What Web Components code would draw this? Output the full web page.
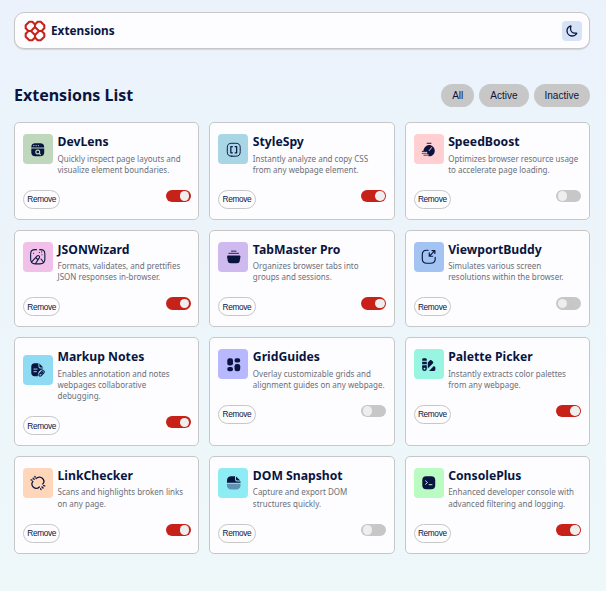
<!DOCTYPE html>
<html lang="en">
<head>
<meta charset="utf-8">
<title>Extensions</title>
<style>
html{height:100%}
body{margin:0;min-height:100%;background:linear-gradient(180deg,#ebf2fc 0%,#eef8f9 100%);font-family:"Noto Sans",sans-serif;color:#091540}
</style>
</head>
<body>
<extensions-app></extensions-app>
<script>
const define=(name,html,setup)=>customElements.define(name,class extends HTMLElement{
  connectedCallback(){
    if(this.shadowRoot)return;
    const t=document.createElement('template');
    t.innerHTML=typeof html==='function'?html(this):html;
    this.attachShadow({mode:'open'}).append(t.content.cloneNode(true));
    if(setup)setup(this,this.shadowRoot);
  }
});
const D='#091540';
const ICONS={
  lens:['#bfd8bd',`<path fill="${D}" d="M2 8.200C2 4 4 2 8.200 2h7.600C20 2 22 4 22 8.200v.3H2zM2 10h20v5.800C22 20 20 22 15.800 22H8.200C4 22 2 20 2 15.800z"/><g fill="#bfd8bd"><circle cx="6" cy="5.600" r="1"/><circle cx="9.500" cy="5.600" r="1"/><circle cx="13" cy="5.600" r="1"/></g><g fill="none" stroke="#bfd8bd" stroke-width="1.800" stroke-linecap="round"><circle cx="12" cy="15.500" r="3"/><path d="m14.400 18 1.600 1.400"/></g>`],
  style:['#a9d6e5',`<g fill="none" stroke="${D}" stroke-width="1.500" stroke-linecap="round" stroke-linejoin="round"><path d="M9 22h6c5 0 7-2 7-7V9c0-5-2-7-7-7H9C4 2 2 4 2 9v6c0 5 2 7 7 7z"/><path d="M9.800 7.200H7.500v9.600h2.300M14.200 7.200h2.300v9.600h-2.300" stroke-width="1.900"/></g>`],
  speed:['#ffcfd2',`<path fill="${D}" d="M12.300 4.600c5 0 9 4 9 8.800 0 4.900-4 8.600-8.800 8.600-1.600 0-2.700-.4-3.900-1.100H12v-1.500H5.700c-.5-.5-.8-1-.9-1.500H9v-1.500H3.700c-.5-5.800 3.300-11.800 8.600-11.800z"/><path fill="none" stroke="${D}" stroke-width="1.500" stroke-linecap="round" d="M9.500 2h6M2 14.600h5M2 17.400h5M4.500 20.200h4"/><path fill="none" stroke="#ffcfd2" stroke-width="1.500" stroke-linecap="round" d="m12.800 13.200 3.600-4.500M2 16h7M4 18.800h5.500"/>`],
  json:['#f1c0e8',`<g fill="none" stroke="${D}" stroke-width="1.700" stroke-linecap="round" stroke-linejoin="round"><path d="M10 1H8C3 1 1 3 1 8v7.500C1 21 3 23 8 23h7.500c5.500 0 7.500-2 7.500-7V8c0-5-2-7-7-7h-1"/><path d="m2.500 20 8.700-9.300c1.700-1.600 4.500.4 3.400 2.600L8.800 22M8.700 13.300l3.700 3.300M17 15.500l4 5"/><path d="M14.500 5.500h.1M18.500 9h.1M5.500 6.500h.1M18 4.500h.1"/></g>`],
  tabs:['#cfbaf0',`<path fill="${D}" d="M3.500 10h17c1.500 0 2 .9 1.800 2.200l-1 6C20.800 21 19.300 22 17 22H7c-2.300 0-3.800-1-4.300-3.800l-1-6C1.500 10.900 2 10 3.500 10z"/><path stroke="${D}" stroke-width="1.400" stroke-linecap="round" d="M4.500 6.700h15M8.500 3.300h7"/>`],
  view:['#a3c4f3',`<g fill="none" stroke="${D}" stroke-width="1.800" stroke-linecap="round" stroke-linejoin="round"><path d="M11 2H9C4 2 2 4 2 9v6c0 5 2 7 7 7h6c5 0 7-2 7-7v-2M21.500 2.500l-8.500 8.500M12.800 6v5.200H18M17 2.500h4.500V7"/></g>`],
  notes:['#90dbf4',`<path fill="${D}" d="M7 2h6v4c0 2.500 1.300 4 4 4h3v1.500c-5.500-.5-8 6-8 10.500H7c-3 0-5-2-5-5V7c0-3 2-5 5-5zM14.500 2.300 20.500 8.500H17c-1.700 0-2.500-1-2.500-2.500z"/><path stroke="#90dbf4" stroke-width="1.500" stroke-linecap="round" d="M6 11h5M6 15h4"/><path fill="none" stroke="${D}" stroke-width="1.700" stroke-linecap="round" stroke-linejoin="round" d="m14 19 4.500-5c2-1.800 4.700.3 3.200 2.500L17.500 21c-2.500 2-4.500-.2-3.500-2zM17 18.500l2.500-2.500"/>`],
  grid:['#b8b8ff',`<g fill="${D}"><rect x="2" y="2" width="8.800" height="11" rx="3.500"/><rect x="13.200" y="2" width="8.800" height="6.500" rx="3"/><rect x="2" y="15.500" width="8.800" height="6.500" rx="3"/><rect x="13.200" y="11" width="8.800" height="11" rx="3.500"/></g>`],
  palette:['#98f5e1',`<g fill="${D}"><path d="M1.800 4.300C1.800 2.800 2.600 2 4 2h2.800C8.200 2 9 2.800 9 4.300v1.500H1.800zM1.800 7.200H9v4H1.800zM1.800 12.700H9v5.500a3.600 3.600 0 0 1-7.200 0z"/><path d="m10.500 8.500 3-3.200c1-1 2-1 3 0l1.800 1.800c1 1 1 2 0 3l-7.800 7.800zM12.500 21.500l7-7h.5c1.400 0 2.200.9 2.200 2.300v2.500c0 1.400-.8 2.200-2.200 2.200z"/></g><circle cx="5.400" cy="18" r="1.400" fill="#98f5e1"/>`],
  link:['#ffd6ba',`<g fill="none" stroke="${D}" stroke-width="2" stroke-linecap="round" stroke-linejoin="round"><path d="M9.500 5.500c3.500-3.500 7.700-2.500 10 0s2.800 6 .3 8.500M14.500 18.500c-3 3-7 2.300-9.500 0s-3-6-.5-8.500"/><path d="M4.800 4.800 6.500 6.500M1.500 7.500l1.800.5M7.500 2 8 3.500M18.500 18.500l1.700 1.700M21 16.500l1.800.5M16.500 21l.5 1.700"/></g>`],
  snapshot:['#8eecf5',`<path fill="${D}" d="M1.500 12V8.500C1.500 4.500 4 2 8 2h6v4c0 2.700 1.300 4 4 4h4.500v2zM15.500 2.200 22 8.500h-4c-1.700 0-2.500-.8-2.500-2.500z"/><path fill="#5f91b1" d="M1.500 13.500h21V16c0 4-2.500 6.500-6.500 6.500H8c-4 0-6.500-2.500-6.500-6.500z"/>`],
  console:['#b9fbc0',`<rect x="2" y="2" width="20" height="20" rx="6" fill="${D}"/><path fill="none" stroke="#b9fbc0" stroke-width="1.500" stroke-linecap="round" stroke-linejoin="round" d="m7 9 3 2.700-3 2.800M12.500 15H17"/>`]
};

define('extension-icon',h=>{
  const [bg,art]=ICONS[h.getAttribute('name')];
  return `<style>
:host{display:flex;flex:none;align-items:center;justify-content:center;width:30px;height:30px;border-radius:4px;background:${bg}}
svg{width:15.500px;height:15.500px;overflow:visible;display:block}
</style><svg viewBox="0 0 24 24">${art}</svg>`;
});

define('toggle-switch',`<style>
:host{display:flex;box-sizing:border-box;width:25px;height:12.300px;border-radius:7px;padding:1.500px;background:#c7c7c7}
:host([on]){background:#c7221a;justify-content:flex-end}
i{width:9.500px;height:9.500px;border-radius:50%;background:#eee}
</style><i></i>`);

define('remove-button',`<style>
:host{display:block}
button{display:block;box-sizing:border-box;width:37.300px;height:19px;border:1px solid #c7c7c7;border-radius:10px;background:#fdfdff;padding:0;color:#091540;font:8.300px/16px "Liberation Sans",Arial,sans-serif;letter-spacing:-.35px;white-space:nowrap}
</style><button><slot></slot></button>`);

define('filter-button',`<style>
:host{display:block}
button{display:block;height:23px;border:0;border-radius:12px;background:#c7c7c7;padding:0 11px;color:#091540;font:10px/23px "Liberation Sans",Arial,sans-serif}
</style><button><slot></slot></button>`);

define('extension-card',h=>`<style>
:host{display:block;box-sizing:border-box;border:1px solid #c7c7c7;border-radius:5px;background:#fdfdff;padding:0 7.500px 10px 8px}
.head{display:flex;align-items:center;gap:4.500px}
.text{padding-top:10px;min-width:0}
h2{margin:0 0 1.400px;font-size:12.200px;line-height:18px;font-weight:700;white-space:nowrap}
p{margin:0;font-size:8px;line-height:11.300px;color:#6b6f78;white-space:nowrap}
.foot{display:flex;justify-content:space-between;align-items:flex-start;margin-top:14.500px}
</style>
<div class="head"><extension-icon name="${h.getAttribute('icon')}"></extension-icon><div class="text"><h2><slot name="title"></slot></h2><p><slot></slot></p></div></div>
<div class="foot"><remove-button>Remove</remove-button><toggle-switch${h.hasAttribute('active')?' on':''}></toggle-switch></div>`);

define('app-header',`<style>
:host{display:flex;box-sizing:border-box;align-items:center;height:37px;border:1px solid #c7c7c7;border-radius:10px;background:#fdfdff;padding:0 7px 0 9px;box-shadow:0 1px 1px rgba(0,0,0,.12)}
.logo{width:22px;height:22px;margin-right:5px}
b{flex:1;font:700 11.800px/20px "Noto Sans",sans-serif;margin-top:-1.500px}
button{display:flex;align-items:center;justify-content:center;width:20px;height:20px;border:0;border-radius:4px;padding:0;background:#d6e2f5}
</style>
<svg class="logo" viewBox="0 0 22 22" fill="none" stroke="#c7221a" stroke-width="2.100" stroke-linejoin="round"><path d="M5.300 1.700h3L11 4.400v2.600L7 11H4.400L1.700 8.300v-3zM16.700 1.700h-3L11 4.400v2.600l4 4h2.600l2.700-2.700v-3zM5.300 20.300h3L11 17.600v-2.600L7 11H4.400l-2.700 2.700v3zM16.700 20.300h-3L11 17.600v-2.600l4-4h2.600l2.700 2.700v3z"/></svg>
<b>Extensions</b>
<button aria-label="Dark mode"><svg width="12" height="12" viewBox="0 0 22 22" fill="none" stroke="#091540" stroke-width="2.400" stroke-linecap="round" stroke-linejoin="round"><path d="M1.860 11.386c.33 4.720 4.335 8.560 9.130 8.770 3.382.147 6.407-1.430 8.222-3.914.751-1.018.348-1.696-.91-1.467-.614.110-1.247.156-1.907.128C11.912 14.718 8.246 10.923 8.227 6.487c-.009-1.192.239-2.320.687-3.346.495-1.137-.1-1.678-1.246-1.192C4.038 3.480 1.549 7.138 1.860 11.386Z"/></svg></button>`);

const DATA=[
['lens','DevLens','Quickly inspect page layouts and<br>visualize element boundaries.',1],
['style','StyleSpy','Instantly analyze and copy CSS<br>from any webpage element.',1],
['speed','SpeedBoost','Optimizes browser resource usage<br>to accelerate page loading.',0],
['json','JSONWizard','Formats, validates, and prettifies<br>JSON responses in-browser.',1],
['tabs','TabMaster Pro','Organizes browser tabs into<br>groups and sessions.',1],
['view','ViewportBuddy','Simulates various screen<br>resolutions within the browser.',0],
['notes','Markup Notes','Enables annotation and notes<br>webpages collaborative<br>debugging.',1],
['grid','GridGuides','Overlay customizable grids and<br>alignment guides on any webpage.',0],
['palette','Palette Picker','Instantly extracts color palettes<br>from any webpage.',1],
['link','LinkChecker','Scans and highlights broken links<br>on any page.',1],
['snapshot','DOM Snapshot','Capture and export DOM<br>structures quickly.',0],
['console','ConsolePlus','Enhanced developer console with<br>advanced filtering and logging.',1]];

define('extensions-app',`<style>
:host{display:block;padding:12px 16px 38px 14px}
.bar{display:flex;align-items:center;justify-content:space-between;height:23px;margin:35px 0 15.300px}
h1{margin:-1px 0 0;font-size:16px;line-height:22px;font-weight:700}
nav{display:flex;gap:5px}
main{display:grid;grid-template-columns:repeat(3,minmax(0,1fr));gap:10px}
</style>
<app-header></app-header>
<div class="bar"><h1>Extensions List</h1><nav><filter-button>All</filter-button><filter-button>Active</filter-button><filter-button>Inactive</filter-button></nav></div>
<main>${DATA.map(([i,t,d,a])=>`<extension-card icon="${i}"${a?' active':''}><span slot="title">${t}</span>${d}</extension-card>`).join('')}</main>`);
</script>
</body>
</html>
